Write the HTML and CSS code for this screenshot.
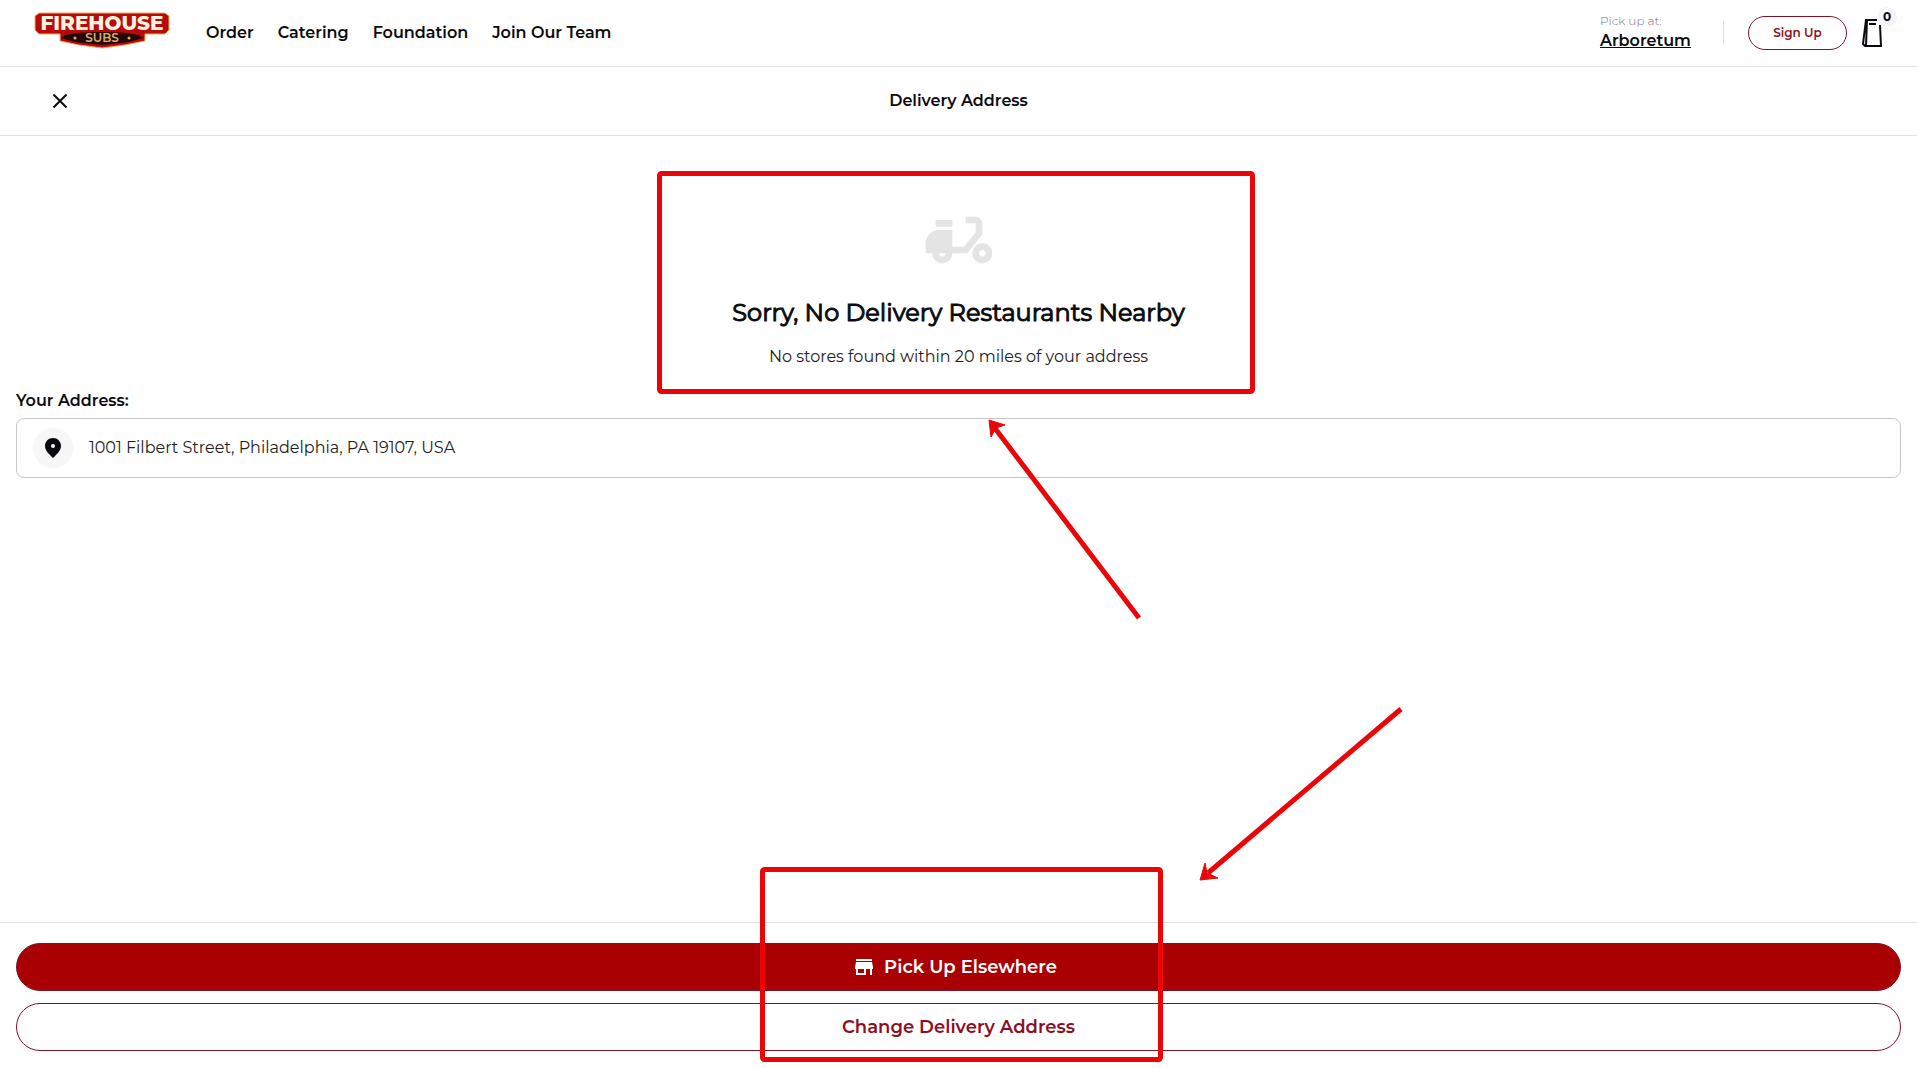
FILE: index.html
```html
<!DOCTYPE html>
<html lang="en">
<head>
<meta charset="utf-8">
<meta name="viewport" content="width=device-width, initial-scale=1">
<title>Delivery Address</title>
<link rel="stylesheet" href="styles.css">
</head>
<body>
<header class="site-header">
  <a class="logo" href="#" aria-label="Firehouse Subs">
    <svg width="138" height="40" viewBox="0 0 138 40">
      <path class="logo-shape" d="M6 3H132L136 6V20L132 24H112V31L92 35L69 38L46 35L27 31V24H6L2 20V6Z"/>
      <path class="logo-plate" d="M32 25Q44 22 69 22T106 25L110 28L96 32L69 35L42 32L28 28Z"/>
      <text class="logo-name" x="69" y="20">FIREHOUSE</text>
      <text class="logo-sub" x="69" y="32">SUBS</text>
      <circle class="logo-dot" cx="42" cy="28" r="1.500"/>
      <circle class="logo-dot" cx="96" cy="28" r="1.500"/>
    </svg>
  </a>
  <nav class="nav">
    <a href="#">Order</a>
    <a href="#">Catering</a>
    <a href="#">Foundation</a>
    <a href="#">Join Our Team</a>
  </nav>
  <div class="pickup">
    <span class="pickup-label">Pick up at:</span>
    <a class="pickup-store" href="#">Arboretum</a>
  </div>
  <button class="sign-up" type="button">Sign Up</button>
  <button class="bag" type="button" aria-label="Bag">
    <svg width="24" height="32" viewBox="0 0 24 32">
      <path d="M18 3H7L4 27L6 29H22L21 8M8 3L7 29M10 7H17"/>
    </svg>
    <span class="bag-count">0</span>
  </button>
</header>

<div class="title-bar">
  <button class="close" type="button" aria-label="Close">
    <svg width="24" height="24" viewBox="0 0 24 24"><path d="M5.500 5.500L18.500 18.500M18.500 5.500L5.500 18.500"/></svg>
  </button>
  <h1 class="title">Delivery Address</h1>
</div>

<main class="content">
  <section class="message">
    <svg class="scooter" width="80" height="80" viewBox="0 0 24 24">
      <path d="M19 7c0-1.100-.9-2-2-2h-3v2h3v2.650L13.520 14H10V9H6c-2.210 0-4 1.790-4 4v3h2c0 1.660 1.340 3 3 3s3-1.340 3-3h4.480L19 10.350V7zM7 17c-.55 0-1-.45-1-1h2c0 .55-.45 1-1 1zM5 6h5v2H5zM19 13c-1.660 0-3 1.340-3 3s1.340 3 3 3 3-1.340 3-3-1.340-3-3-3zm0 4c-.55 0-1-.45-1-1s.45-1 1-1 1 .45 1 1-.45 1-1 1z"/>
    </svg>
    <h2 class="message-title">Sorry, No Delivery Restaurants Nearby</h2>
    <p class="message-text">No stores found within 20 miles of your address</p>
  </section>
  <section class="address">
    <h3 class="address-label">Your Address:</h3>
    <div class="address-box">
      <span class="pin">
        <svg width="24" height="24" viewBox="0 0 24 24"><path fill-rule="evenodd" d="M12 2C7.500 2 4 5.500 4 10c0 4.500 3.500 7.500 8 12c4.500-4.500 8-7.500 8-12c0-4.500-3.500-8-8-8zM12 8a2 2 0 1 1 0 4a2 2 0 0 1 0-4z"/></svg>
      </span>
      <span>1001 Filbert Street, Philadelphia, PA 19107, USA</span>
    </div>
  </section>
</main>

<footer class="actions">
  <button class="action primary" type="button">
    <svg width="24" height="24" viewBox="0 0 24 24"><path d="M20 4H4v2h16V4zm1 10v-2l-1-5H4l-1 5v2h1v6h10v-6h4v6h2v-6h1zm-9 4H6v-4h6v4z"/></svg>
    Pick Up Elsewhere
  </button>
  <button class="action secondary" type="button">Change Delivery Address</button>
</footer>

<svg class="annotations" aria-hidden="true">
  <rect x="659.500" y="173.500" width="593" height="218" rx="2"/>
  <rect x="762.500" y="869.500" width="398" height="190" rx="2"/>
  <path d="M1139 618L994 427"/>
  <path class="head" d="M989 420L1005 425L996 428L991 437Z"/>
  <path d="M1401 709L1208 873"/>
  <path class="head" d="M1200 880L1205 863L1207 873L1218 878Z"/>
</svg>
</body>
</html>
```
FILE: styles.css
```css
* {
  box-sizing: border-box;
}

body {
  position: relative;
  display: flex;
  flex-direction: column;
  min-height: 100vh;
  margin: 0;
  background: #fff;
  color: #0b0b0f;
  font: 16px/24px Montserrat, Inter, sans-serif;
}

h1, h2, h3, p {
  margin: 0;
}

a {
  color: inherit;
  text-decoration: none;
}

button {
  padding: 0;
  border: 0;
  background: none;
  color: inherit;
  font: inherit;
  cursor: pointer;
}

svg {
  display: block;
  flex: none;
}

.site-header {
  display: flex;
  align-items: center;
  height: 67px;
  padding: 0 24px 0 33px;
  border-bottom: 1px solid #e0e0e0;
}

.logo {
  margin: 0 35px 6px 0;
}

.logo-shape {
  fill: #b80a0a;
  stroke: #e8b25c;
  stroke-width: 1;
}

.logo-plate {
  fill: #250806;
}

.logo-name {
  fill: #fff3e0;
  font-size: 20px;
  font-weight: 800;
  text-anchor: middle;
}

.logo-sub {
  fill: #d9ae6c;
  font-size: 12px;
  font-weight: 600;
  text-anchor: middle;
}

.logo-dot {
  fill: #d9ae6c;
}

.nav {
  display: flex;
  gap: 24px;
  font-weight: 600;
}

.pickup {
  display: flex;
  flex-direction: column;
  width: 124px;
  margin: 0 24px 4px auto;
  line-height: 20px;
  background: linear-gradient(#e0e0e0, #e0e0e0) right 10px / 1px 24px no-repeat;
}

.pickup-label {
  color: #777;
  font-size: 12px;
  font-weight: 300;
}

.pickup-store {
  font-weight: 600;
  text-decoration: underline;
}

.sign-up {
  width: 99px;
  height: 34px;
  border: 1px solid #7d1528;
  border-radius: 17px;
  color: #8c1023;
  font-size: 12px;
  font-weight: 600;
}

.bag {
  position: relative;
  width: 34px;
  margin-left: 12px;
}

.bag path {
  fill: none;
  stroke: #0b0b0f;
  stroke-width: 2;
}

.bag-count {
  position: absolute;
  top: -10px;
  right: -4px;
  width: 20px;
  height: 20px;
  border-radius: 50%;
  background: #f5f5f7;
  font-size: 12px;
  font-weight: 700;
  line-height: 20px;
}

.title-bar {
  display: grid;
  grid-template-columns: 1fr auto 1fr;
  align-items: center;
  height: 69px;
  padding: 0 48px;
  border-bottom: 1px solid #e0e0e0;
}

.close {
  width: 24px;
}

.close path {
  stroke: #0b0b0f;
  stroke-width: 2;
}

.title {
  font-size: 16px;
  font-weight: 600;
}

.content {
  flex: 1;
  padding: 64px 16px;
}

.message {
  display: flex;
  flex-direction: column;
  align-items: center;
  text-align: center;
}

.scooter {
  fill: #e4e4e4;
}

.message-title {
  margin: 17px 0 16px;
  font-size: 24px;
  font-weight: 400;
  line-height: 32px;
  -webkit-text-stroke: 1px #0b0b0f;
}

.message-text {
  color: #222;
}

.address-label {
  margin: 20px 0 5px;
  font-size: 16px;
  font-weight: 600;
}

.address-box {
  display: flex;
  align-items: center;
  gap: 16px;
  height: 60px;
  padding: 0 16px;
  border: 1px solid #c8c8c8;
  border-radius: 8px;
  color: #222;
}

.pin {
  display: grid;
  place-items: center;
  width: 40px;
  height: 40px;
  border-radius: 50%;
  background: #f7f7f8;
}

.pin path {
  fill: #0b0b0f;
}

.actions {
  display: flex;
  flex-direction: column;
  gap: 12px;
  padding: 20px 16px 17px;
  border-top: 1px solid #e0e0e0;
}

.action {
  display: flex;
  align-items: center;
  justify-content: center;
  gap: 8px;
  height: 48px;
  border: 1px solid #7d1528;
  border-radius: 24px;
  font-size: 18px;
  font-weight: 600;
}

.primary {
  padding-right: 8px;
  background: #a80003;
  color: #fff;
}

.primary path {
  fill: #fff;
}

.secondary {
  color: #8c1023;
}

.annotations {
  position: absolute;
  inset: 0;
  width: 100%;
  height: 100%;
  fill: none;
  stroke: #ea0608;
  stroke-width: 5;
  pointer-events: none;
}

.annotations .head {
  fill: #ea0608;
  stroke-width: 1;
}
```
